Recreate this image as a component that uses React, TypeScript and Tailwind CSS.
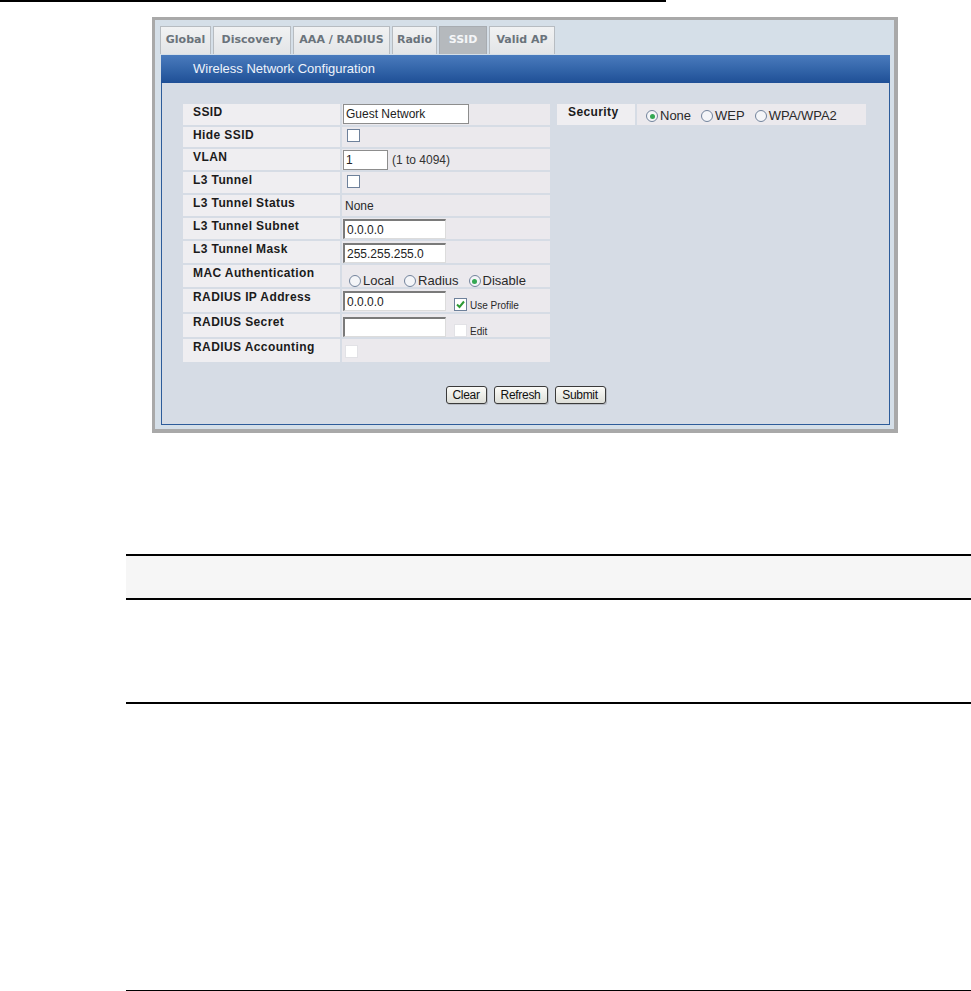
import type { ReactNode } from 'react';

const tabs = [
  { label: 'Global', w: 'w-[51px]' },
  { label: 'Discovery', w: 'w-[78px]' },
  { label: 'AAA / RADIUS', w: 'w-[97px]' },
  { label: 'Radio', w: 'w-[45px]' },
  { label: 'SSID', w: 'w-[48px]', active: true },
  { label: 'Valid AP', w: 'w-[66px]' },
];

function Radio({ checked }: { checked?: boolean }) {
  return (
    <span className="inline-flex h-[12px] w-[12px] shrink-0 items-center justify-center rounded-full border border-[#72839c] bg-[#f4f5f8]">
      {checked && <span className="h-[5px] w-[5px] rounded-full bg-[#33a853]" />}
    </span>
  );
}

function Check({ checked, faint }: { checked?: boolean; faint?: boolean }) {
  return (
    <span
      className={`inline-flex h-[13px] w-[13px] shrink-0 items-center justify-center bg-white ${
        faint ? 'border border-[#e2e2e6]' : 'border border-[#6e819b]'
      }`}
    >
      {checked && (
        <svg width="11" height="11" viewBox="0 0 11 11">
          <path d="M2 5.5 L4.5 8 L9 2.5" fill="none" stroke="#2c9a33" strokeWidth="2" />
        </svg>
      )}
    </span>
  );
}

function Input({ value, w, inset }: { value: string; w: string; inset?: boolean }) {
  return (
    <div
      className={`${w} flex h-[20px] items-center bg-white pl-[2px] text-[12px] text-[#222] ${
        inset
          ? 'border-t-2 border-l-2 border-r border-b border-t-[#7a7a7a] border-l-[#7a7a7a] border-r-[#dcdcdc] border-b-[#dcdcdc]'
          : 'border border-[#8d8d8d]'
      }`}
    >
      {value}
    </div>
  );
}

function Row({ label, h, children }: { label: string; h: string; children?: ReactNode }) {
  return (
    <div className={`flex gap-[2px] ${h}`}>
      <div className="w-[157px] bg-[#efeef1] pl-[10px] pt-[1px] text-[12px] leading-[14px] font-bold tracking-[0.4px] text-[#1b1b1b]">
        {label}
      </div>
      <div className="flex flex-1 items-center bg-[#ebe9ed] pl-[1px] text-[12px] text-[#2a2a2a]">{children}</div>
    </div>
  );
}

function Btn({ label, w }: { label: string; w: string }) {
  return (
    <div
      className={`${w} flex h-[18px] items-center justify-center rounded-[3px] border border-[#3a3a3a] bg-linear-to-b from-[#fbfbf8] to-[#dedfd9] font-['Liberation_Sans_Narrow','Liberation_Sans',sans-serif] text-[12px] tracking-[-0.3px] text-[#111] shadow-[1px_1px_0_#b8bcc4]`}
    >
      {label}
    </div>
  );
}

export default function App() {
  return (
    <div className="relative h-[991px] w-[971px] overflow-hidden bg-white font-['Liberation_Sans',Arial,sans-serif]">
      <div className="h-[2px] w-[666px] bg-black" />

      {/* screenshot frame */}
      <div className="mt-[15px] ml-[152px] flex h-[416px] w-[746px] flex-col border-t-[3px] border-l-[3px] border-r-[4px] border-b-[4px] border-[#a9a9a9] bg-[#d5dfe8] pt-[6px] pr-[4px] pb-[4px] pl-[6px]">
        {/* tabs */}
        <div className="-ml-px flex h-[29px] items-start gap-[2px]">
          {tabs.map((t) => (
            <div
              key={t.label}
              className={`${t.w} flex h-[28px] items-center justify-center border border-b-0 font-['DejaVu_Sans',Verdana,sans-serif] text-[11px] font-bold ${
                t.active
                  ? 'border-[#a8acb1] bg-[#b5b9bd] text-[#f4f6f8]'
                  : 'border-[#b7bcc1] bg-linear-to-b from-[#f1f2f3] to-[#e3e5e7] text-[#6a737b]'
              }`}
            >
              {t.label}
            </div>
          ))}
        </div>

        {/* header */}
        <div className="flex h-[28px] items-center bg-linear-to-b from-[#4a7bbd] via-[#3466aa] to-[#1f4f96] pl-[32px] text-[13px] text-[#eef3fb]">
          Wireless Network Configuration
        </div>

        {/* content */}
        <div className="flex flex-1 flex-col border-x border-b border-[#2d5c9a] bg-[#d6dce5] pt-[21px] pl-[21px]">
          <div className="flex items-start gap-[7px]">
            <div className="flex w-[367px] flex-col gap-[2px]">
              <Row label="SSID" h="h-[21px]">
                <div className="-mt-[1px]">
                  <Input value="Guest Network" w="w-[126px]" />
                </div>
              </Row>
              <Row label="Hide SSID" h="h-[20px]">
                <span className="ml-[4px] mt-[2px]">
                  <Check />
                </span>
              </Row>
              <Row label="VLAN" h="h-[21px]">
                <Input value="1" w="w-[45px]" />
                <span className="ml-[4px] text-[#333]">(1 to 4094)</span>
              </Row>
              <Row label="L3 Tunnel" h="h-[21px]">
                <span className="ml-[4px] mt-[2px]">
                  <Check />
                </span>
              </Row>
              <Row label="L3 Tunnel Status" h="h-[21px]">
                <span className="ml-[2px]">None</span>
              </Row>
              <Row label="L3 Tunnel Subnet" h="h-[21px]">
                <div className="mt-[1px]">
                  <Input value="0.0.0.0" w="w-[103px]" inset />
                </div>
              </Row>
              <Row label="L3 Tunnel Mask" h="h-[22px]">
                <div className="mt-[2px]">
                  <Input value="255.255.255.0" w="w-[103px]" inset />
                </div>
              </Row>
              <Row label="MAC Authentication" h="h-[22px]">
                <div className="ml-[6px] flex items-center gap-[2px] pt-[10px] text-[13px]">
                  <Radio />
                  <span className="mr-[8px]">Local</span>
                  <Radio />
                  <span className="mr-[8px]">Radius</span>
                  <Radio checked />
                  <span>Disable</span>
                </div>
              </Row>
              <Row label="RADIUS IP Address" h="h-[23px]">
                <div className="mt-[1px]">
                  <Input value="0.0.0.0" w="w-[103px]" inset />
                </div>
                <div className="ml-[8px] flex items-end gap-[3px] pt-[8px]">
                  <Check checked />
                  <span className="text-[10px] leading-[11px]">Use Profile</span>
                </div>
              </Row>
              <Row label="RADIUS Secret" h="h-[23px]">
                <div className="mt-[3px]">
                  <Input value="" w="w-[103px]" inset />
                </div>
                <div className="ml-[8px] flex items-end gap-[3px] pt-[9px]">
                  <Check faint />
                  <span className="text-[10px] leading-[11px]">Edit</span>
                </div>
              </Row>
              <Row label="RADIUS Accounting" h="h-[23px]">
                <span className="ml-[2px] mt-[6px]">
                  <Check faint />
                </span>
              </Row>
            </div>

            <div className="flex h-[21px] w-[309px] gap-[2px]">
              <div className="w-[78px] bg-[#efeef1] pl-[11px] pt-[1px] text-[12px] leading-[14px] font-bold tracking-[0.4px] text-[#1b1b1b]">
                Security
              </div>
              <div className="flex flex-1 items-center gap-[2px] bg-[#ebe9ed] pl-[9px] pt-[3px] text-[13px] text-[#2a2a2a]">
                <Radio checked />
                <span className="mr-[8px]">None</span>
                <Radio />
                <span className="mr-[8px]">WEP</span>
                <Radio />
                <span>WPA/WPA2</span>
              </div>
            </div>
          </div>

          <div className="mt-[24px] -ml-[21px] flex justify-center gap-[7px]">
            <Btn label="Clear" w="w-[41px]" />
            <Btn label="Refresh" w="w-[54px]" />
            <Btn label="Submit" w="w-[51px]" />
          </div>
        </div>
      </div>

      {/* document table below */}
      <div className="mt-[121px] ml-[126px] w-[845px]">
        <div className="h-[2px] bg-black" />
        <div className="h-[42px] bg-[#f6f6f6]" />
        <div className="h-[2px] bg-black" />
        <div className="h-[102px]" />
        <div className="h-[2px] bg-black" />
        <div className="h-[286px]" />
        <div className="h-[2px] bg-black" />
      </div>
    </div>
  );
}
